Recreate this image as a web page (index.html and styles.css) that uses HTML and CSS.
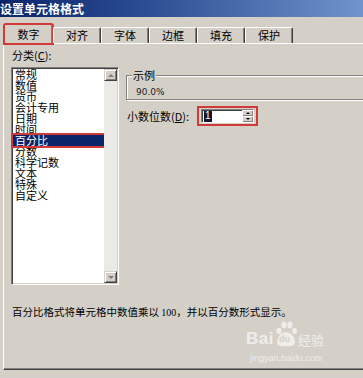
FILE: index.html
```html
<!DOCTYPE html>
<html lang="zh">
<head>
<meta charset="utf-8">
<title>设置单元格格式</title>
<link rel="stylesheet" href="styles.css">
</head>
<body>
<div class="dialog">
  <div class="titlebar">设置单元格格式</div>
  <div class="tabs">
    <div class="tab active">数字</div>
    <div class="tab">对齐</div>
    <div class="tab">字体</div>
    <div class="tab">边框</div>
    <div class="tab">填充</div>
    <div class="tab">保护</div>
  </div>
  <div class="panel">
    <div class="main">
      <div class="cat">
        <div class="cat-label">分类(<u>C</u>):</div>
        <div class="listbox">
          <ul class="items">
            <li>常规</li>
            <li>数值</li>
            <li>货币</li>
            <li>会计专用</li>
            <li>日期</li>
            <li>时间</li>
            <li class="sel">百分比</li>
            <li>分数</li>
            <li>科学记数</li>
            <li>文本</li>
            <li>特殊</li>
            <li>自定义</li>
          </ul>
          <div class="scrollbar">
            <div class="sb-btn"><span class="arr up"></span></div>
            <div class="sb-track"></div>
            <div class="sb-btn"><span class="arr down"></span></div>
          </div>
        </div>
      </div>
      <div class="right">
        <div class="group">
          <span class="legend">示例</span>
          <div class="sample">90.0%</div>
        </div>
        <div class="decimals">
          <span class="dec-label">小数位数(<u>D</u>):</span>
          <div class="spin-wrap">
            <div class="spin">
              <span class="val"><span class="selval">1</span></span>
              <div class="spinner">
                <div class="sp-btn"><span class="arr up small"></span></div>
                <div class="sp-btn"><span class="arr down small"></span></div>
              </div>
            </div>
          </div>
        </div>
      </div>
    </div>
    <p class="desc">百分比格式将单元格中数值乘以 <span class="num">100</span>，并以百分数形式显示。</p>
    <div class="watermark">
      <div class="wm-top">
        <span class="wm-bai">Bai</span>
        <span class="wm-paw">
          <svg width="22" height="28" viewBox="0 0 22 28">
            <ellipse cx="4" cy="11" rx="2.6" ry="3.2" fill="#efedea"/>
            <ellipse cx="9" cy="5" rx="2.6" ry="3.4" fill="#efedea"/>
            <ellipse cx="15" cy="5" rx="2.6" ry="3.4" fill="#efedea"/>
            <ellipse cx="19.5" cy="11" rx="2.4" ry="3" fill="#efedea"/>
            <path d="M11 12 C6 12 2 18 2 22 C2 26 6 27 11 26 C16 27 20 26 20 22 C20 18 16 12 11 12 Z" fill="#efedea"/>
          </svg>
          <span class="wm-du">du</span>
        </span>
        <span class="wm-jy">经验</span>
      </div>
      <div class="wm-url">jingyan.baidu.com</div>
    </div>
  </div>
</div>
</body>
</html>
```

FILE: styles.css
```css
html, body {
  margin: 0;
  padding: 0;
}
body {
  width: 363px;
  height: 378px;
  overflow: hidden;
  background: #d4d0c8;
  font-family: "Noto Sans CJK SC", "Noto Sans", sans-serif;
  font-size: 11px;
  color: #000;
}
.dialog {
  width: 363px;
  height: 378px;
  overflow: hidden;
}
.titlebar {
  height: 17px;
  line-height: 17px;
  background: linear-gradient(90deg, #0a246a 0%, #2c4d92 40%, #7093cc 100%);
  color: #fff;
  font-weight: bold;
  font-size: 12px;
  white-space: nowrap;
}
.tabs {
  display: flex;
  align-items: flex-end;
  height: 26px;
  padding-left: 4px;
  position: relative;
  z-index: 2;
}
.tab {
  width: 48px;
  height: 16px;
  box-sizing: border-box;
  border-top: 1px solid #fff;
  border-left: 1px solid #fff;
  border-right: 1px solid #404040;
  box-shadow: inset -1px 0 #808080;
  border-radius: 2px 2px 0 0;
  text-align: center;
  line-height: 15px;
  background: #d4d0c8;
}
.tab.active {
  width: 49px;
  height: 20px;
  margin-bottom: -1px;
  line-height: 18px;
  outline: 2px solid #d23a3a;
  outline-offset: -1px;
}
.panel {
  position: relative;
  width: 420px;
  height: 327px;
  box-sizing: border-box;
  margin-left: 3px;
  border-top: 1px solid #fff;
  border-left: 1px solid #fff;
  border-bottom: 1px solid #404040;
  box-shadow: inset 0 -1px #808080;
}
.main {
  display: flex;
  padding: 4px 0 0 7px;
}
.cat {
  width: 108px;
}
.cat-label {
  height: 14px;
  line-height: 14px;
  margin-left: 1px;
}
.listbox {
  margin-top: 5px;
  height: 218px;
  box-sizing: border-box;
  display: flex;
  border-style: solid;
  border-width: 1px;
  border-color: #808080 #fff #fff #808080;
  box-shadow: inset 1px 1px #404040, inset -1px -1px #d4d0c8;
  padding: 1px;
  background: #fff;
}
.items {
  flex: 1;
  margin: 0;
  padding: 0;
  list-style: none;
}
.items li {
  height: 11px;
  line-height: 11px;
  padding-left: 2px;
  white-space: nowrap;
}
.items li.sel {
  background: #0a246a;
  color: #fff;
  outline: 2px solid #d23a3a;
}
.scrollbar {
  width: 13px;
  display: flex;
  flex-direction: column;
}
.sb-btn {
  height: 12px;
  box-sizing: border-box;
  background: #d4d0c8;
  border: 1px solid;
  border-color: #d4d0c8 #404040 #404040 #d4d0c8;
  box-shadow: inset 1px 1px #fff, inset -1px -1px #808080;
  display: flex;
  align-items: center;
  justify-content: center;
}
.sb-track {
  flex: 1;
  background: #eceae6;
}
.arr {
  width: 0;
  height: 0;
  border-left: 3px solid transparent;
  border-right: 3px solid transparent;
}
.arr.up {
  border-bottom: 3px solid #808080;
}
.arr.down {
  border-top: 3px solid #808080;
}
.arr.small.up {
  border-bottom-color: #000;
  border-bottom-width: 2px;
}
.arr.small.down {
  border-top-color: #000;
  border-top-width: 2px;
}
.arr.small {
  border-left-width: 2px;
  border-right-width: 2px;
}
.right {
  margin-left: 7px;
  padding-top: 27px;
  flex: 1;
}
.group {
  position: relative;
  height: 23px;
  border: 1px solid #808080;
  box-shadow: inset 1px 1px #fff, 1px 1px #fff;
}
.legend {
  position: absolute;
  top: -7px;
  left: 5px;
  padding: 0 1px;
  line-height: 12px;
  background: #d4d0c8;
}
.sample {
  padding: 10px 0 0 9px;
  line-height: 12px;
  font-family: "DejaVu Sans", sans-serif;
  font-size: 9px;
  color: #222;
}
.decimals {
  display: flex;
  align-items: center;
  height: 20px;
  margin-top: 6px;
}
.dec-label {
  width: 70px;
  margin-left: 1px;
  white-space: nowrap;
}
.spin-wrap {
  width: 61px;
  height: 20px;
  box-sizing: border-box;
  border: 2px solid #d23a3a;
  padding: 1px 2px;
}
.spin {
  height: 14px;
  box-sizing: border-box;
  display: flex;
  background: #fff;
  border-style: solid;
  border-width: 1px;
  border-color: #808080 #fff #fff #808080;
  box-shadow: inset 1px 1px #404040;
}
.val {
  flex: 1;
  padding: 1px 0 0 2px;
  display: flex;
}
.selval {
  background: #101830;
  color: #fff;
  font-family: "Liberation Sans", sans-serif;
  font-size: 10px;
  line-height: 10px;
  padding: 0 1px;
}
.spinner {
  width: 11px;
  display: flex;
  flex-direction: column;
}
.sp-btn {
  flex: 1;
  background: #d4d0c8;
  box-shadow: inset 1px 1px #fff, inset -1px -1px #808080;
  display: flex;
  align-items: center;
  justify-content: center;
}
.desc {
  margin: 20px 0 0 8px;
  font-size: 10.5px;
  line-height: 14px;
  white-space: nowrap;
}
.num {
  font-family: "Liberation Serif", serif;
  font-size: 10px;
}
.watermark {
  position: absolute;
  left: 242px;
  top: 276px;
  color: #efedea;
}
.wm-top {
  display: flex;
  align-items: flex-end;
}
.wm-bai {
  font-family: "Liberation Sans", sans-serif;
  font-weight: bold;
  font-size: 17px;
  line-height: 18px;
  letter-spacing: 0.5px;
}
.wm-paw {
  position: relative;
  width: 22px;
  height: 28px;
  margin: 0 1px;
}
.wm-paw svg {
  display: block;
}
.wm-du {
  position: absolute;
  left: 4px;
  top: 14px;
  font-family: "Liberation Sans", sans-serif;
  font-weight: bold;
  font-size: 9px;
  line-height: 10px;
  color: #d4d0c8;
}
.wm-jy {
  font-size: 13px;
  line-height: 17px;
}
.wm-url {
  margin-top: 5px;
  font-family: "Liberation Sans", sans-serif;
  font-size: 9px;
  line-height: 10px;
  padding-left: 4px;
}
```
